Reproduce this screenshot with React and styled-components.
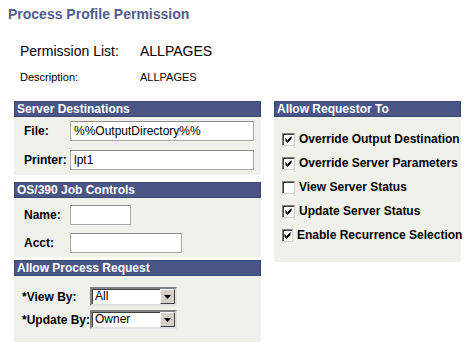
import React from "react";
import styled, { createGlobalStyle } from "styled-components";

const Global = createGlobalStyle`
  html, body { margin: 0; padding: 0; background: #fff; }
  body { font-family: "Liberation Sans", Arial, sans-serif; color: #000; }
`;

const Page = styled.div`
  padding: 6px 0 0 8px;
  width: 467px;
`;

const Title = styled.h1`
  margin: 0;
  font-size: 14px;
  font-weight: bold;
  color: #525c8e;
  line-height: 17px;
`;

const InfoTable = styled.div`
  display: grid;
  grid-template-columns: 120px auto;
  margin: 17px 0 0 12px;
  align-items: center;
`;

const InfoLabel = styled.div`
  font-size: ${(p) => p.$size}px;
  line-height: ${(p) => p.$lh}px;
`;

const InfoValue = styled.div`
  font-size: ${(p) => p.$size}px;
  line-height: ${(p) => p.$lh}px;
`;

const Columns = styled.div`
  display: flex;
  gap: 13px;
  margin: 9px 0 0 6px;
  align-items: flex-start;
`;

const Column = styled.div`
  display: flex;
  flex-direction: column;
  width: ${(p) => p.$w}px;
`;

const Panel = styled.section`
  background: #f1f1eb;
  margin-bottom: ${(p) => p.$mb || 0}px;
`;

const Header = styled.div`
  background: #4a5686;
  border: 1px solid #3a4670;
  color: #fff;
  font-size: 12px;
  font-weight: bold;
  line-height: 14px;
  height: 14px;
  padding-left: 2px;
  white-space: nowrap;
`;

const Body = styled.div`
  display: flex;
  flex-direction: column;
  gap: ${(p) => p.$gap}px;
  padding: ${(p) => p.$pad};
  min-height: ${(p) => p.$minh || 0}px;
`;

const Row = styled.div`
  display: flex;
  align-items: center;
`;

const Label = styled.label`
  width: ${(p) => p.$w}px;
  box-sizing: border-box;
  font-size: 12px;
  font-weight: bold;
  white-space: nowrap;
`;

const Input = styled.div`
  box-sizing: border-box;
  width: ${(p) => p.$w}px;
  height: 20px;
  background: #fff;
  border: 1px solid #a9a9a9;
  border-top-color: #8e8e8e;
  font-size: 12px;
  line-height: 18px;
  padding-left: 3px;
  white-space: nowrap;
  overflow: hidden;
`;

const Select = styled.div`
  box-sizing: border-box;
  width: 87px;
  height: 19px;
  background: #fff;
  border: 2px solid;
  border-color: #808080 #e0e0e0 #e0e0e0 #808080;
  box-shadow: inset 1px 1px 0 #404040;
  display: flex;
  align-items: stretch;
`;

const SelectText = styled.span`
  flex: 1;
  font-size: 12px;
  line-height: 15px;
  padding-left: 3px;
`;

const SelectButton = styled.span`
  width: 15px;
  background: #d4d0c8;
  border-left: 1px solid #fff;
  border-top: 1px solid #fff;
  border-right: 1px solid #404040;
  border-bottom: 1px solid #404040;
  box-sizing: border-box;
  display: flex;
  align-items: center;
  justify-content: center;
`;

const CheckRow = styled.div`
  display: flex;
  align-items: center;
  gap: 4px;
  font-size: 12px;
  font-weight: bold;
  white-space: nowrap;
  height: 16px;
`;

const Box = styled.span`
  box-sizing: border-box;
  width: 13px;
  height: 13px;
  background: #fff;
  border: 1px solid;
  border-color: #808080 #d4d0c8 #d4d0c8 #808080;
  box-shadow: inset 1px 1px 0 #404040;
  display: flex;
  align-items: center;
  justify-content: center;
`;

const Check = () => (
  <svg width="9" height="9" viewBox="0 0 9 9">
    <path d="M1.5 3.5 L3.5 5.5 L7.5 1.5 M1.5 4.5 L3.5 6.5 L7.5 2.5 M1.5 5.5 L3.5 7.5 L7.5 3.5" stroke="#000" strokeWidth="1" fill="none" />
  </svg>
);

const Arrow = () => (
  <svg width="7" height="4" viewBox="0 0 7 4">
    <path d="M0 0 H7 L3.5 4 Z" fill="#000" />
  </svg>
);

const DropDown = ({ value }) => (
  <Select>
    <SelectText>{value}</SelectText>
    <SelectButton>
      <Arrow />
    </SelectButton>
  </Select>
);

const CheckItem = ({ checked, children }) => (
  <CheckRow>
    <Box>{checked && <Check />}</Box>
    {children}
  </CheckRow>
);

export default function App() {
  return (
    <>
      <Global />
      <Page>
        <Title>Process Profile Permission</Title>
        <InfoTable>
          <InfoLabel $size={14} $lh={22}>Permission List:</InfoLabel>
          <InfoValue $size={14} $lh={22}>ALLPAGES</InfoValue>
          <InfoLabel $size={11} $lh={30}>Description:</InfoLabel>
          <InfoValue $size={11} $lh={30}>ALLPAGES</InfoValue>
        </InfoTable>
        <Columns>
          <Column $w={247}>
            <Panel $mb={7}>
              <Header>Server Destinations</Header>
              <Body $gap={9} $pad="4px 0 5px 10px">
                <Row>
                  <Label $w={46}>File:</Label>
                  <Input $w={184}>%%OutputDirectory%%</Input>
                </Row>
                <Row>
                  <Label $w={46}>Printer:</Label>
                  <Input $w={184}>lpt1</Input>
                </Row>
              </Body>
            </Panel>
            <Panel $mb={3}>
              <Header>OS/390 Job Controls</Header>
              <Body $gap={8} $pad="7px 0 4px 10px">
                <Row>
                  <Label $w={46}>Name:</Label>
                  <Input $w={61} />
                </Row>
                <Row>
                  <Label $w={46}>Acct:</Label>
                  <Input $w={112} />
                </Row>
              </Body>
            </Panel>
            <Panel>
              <Header>Allow Process Request</Header>
              <Body $gap={4} $pad="11px 0 13px 8px">
                <Row>
                  <Label $w={68}>*View By:</Label>
                  <DropDown value="All" />
                </Row>
                <Row>
                  <Label $w={68}>*Update By:</Label>
                  <DropDown value="Owner" />
                </Row>
              </Body>
            </Panel>
          </Column>
          <Column $w={187}>
            <Panel>
              <Header>Allow Requestor To</Header>
              <Body $gap={8} $pad="14px 0 0 8px" $minh={131}>
                <CheckItem checked>Override Output Destination</CheckItem>
                <CheckItem checked>Override Server Parameters</CheckItem>
                <CheckItem>View Server Status</CheckItem>
                <CheckItem checked>Update Server Status</CheckItem>
                <CheckItem checked>Enable Recurrence Selection</CheckItem>
              </Body>
            </Panel>
          </Column>
        </Columns>
      </Page>
    </>
  );
}
